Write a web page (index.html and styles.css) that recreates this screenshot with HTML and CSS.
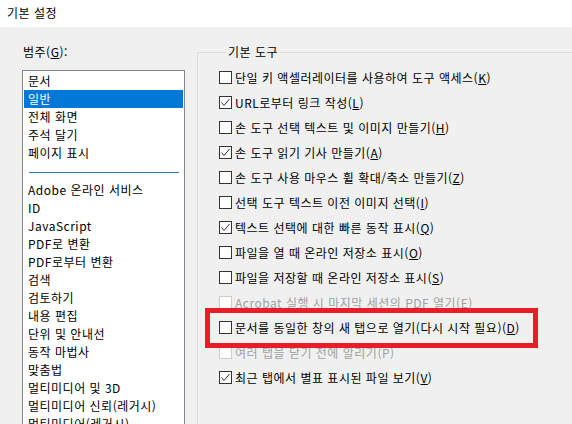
FILE: index.html
```html
<!DOCTYPE html>
<html lang="ko">
<head>
  <meta charset="UTF-8">
  <title>기본 설정</title>
  <link rel="stylesheet" href="styles.css">
</head>
<body>
  <div class="titlebar">기본 설정</div>

  <div class="dialog">
    <div class="category">
      <div class="cat-label">범주(<span class="key">G</span>):</div>
      <ul class="cat-list">
        <li>문서</li>
        <li class="selected">일반</li>
        <li>전체 화면</li>
        <li>주석 달기</li>
        <li>페이지 표시</li>
        <li class="sep"><span></span></li>
        <li>Adobe 온라인 서비스</li>
        <li>ID</li>
        <li>JavaScript</li>
        <li>PDF로 변환</li>
        <li>PDF로부터 변환</li>
        <li>검색</li>
        <li>검토하기</li>
        <li>내용 편집</li>
        <li>단위 및 안내선</li>
        <li>동작 마법사</li>
        <li>맞춤법</li>
        <li>멀티미디어 및 3D</li>
        <li>멀티미디어 신뢰(레거시)</li>
        <li>멀티미디어(레거시)</li>
      </ul>
    </div>

    <fieldset class="group">
      <legend>기본 도구</legend>
      <div class="opt"><span class="box"></span><span>단일 키 액셀러레이터를 사용하여 도구 액세스(<span class="key">K</span>)</span></div>
      <div class="opt"><span class="box"><svg viewBox="0 0 11 11"><polyline points="1.5,5.5 4,8.5 9.5,2" /></svg></span><span>URL로부터 링크 작성(<span class="key">L</span>)</span></div>
      <div class="opt"><span class="box"></span><span>손 도구 선택 텍스트 및 이미지 만들기(<span class="key">H</span>)</span></div>
      <div class="opt"><span class="box"><svg viewBox="0 0 11 11"><polyline points="1.5,5.5 4,8.5 9.5,2" /></svg></span><span>손 도구 읽기 기사 만들기(<span class="key">A</span>)</span></div>
      <div class="opt"><span class="box"></span><span>손 도구 사용 마우스 휠 확대/축소 만들기(<span class="key">Z</span>)</span></div>
      <div class="opt"><span class="box"></span><span>선택 도구 텍스트 이전 이미지 선택(<span class="key">I</span>)</span></div>
      <div class="opt"><span class="box"><svg viewBox="0 0 11 11"><polyline points="1.5,5.5 4,8.5 9.5,2" /></svg></span><span>텍스트 선택에 대한 빠른 동작 표시(<span class="key">Q</span>)</span></div>
      <div class="opt"><span class="box"></span><span>파일을 열 때 온라인 저장소 표시(<span class="key">O</span>)</span></div>
      <div class="opt"><span class="box"></span><span>파일을 저장할 때 온라인 저장소 표시(<span class="key">S</span>)</span></div>
      <div class="opt disabled"><span class="box"></span><span>Acrobat 실행 시 마지막 세션의 PDF 열기(E)</span></div>
      <div class="opt"><span class="box"></span><span>문서를 동일한 창의 새 탭으로 열기(다시 시작 필요)(<span class="key">D</span>)</span></div>
      <div class="opt disabled"><span class="box"></span><span>여러 탭을 닫기 전에 알리기(P)</span></div>
      <div class="opt"><span class="box"><svg viewBox="0 0 11 11"><polyline points="1.5,5.5 4,8.5 9.5,2" /></svg></span><span>최근 탭에서 별표 표시된 파일 보기(<span class="key">V</span>)</span></div>
    </fieldset>
  </div>

  <div class="highlight"></div>
</body>
</html>
```

FILE: styles.css
```css
html, body {
  overflow: hidden;
}
body {
  margin: 0;
  background-color: #f0f0f0;
  color: #000;
  font-family: "Noto Sans CJK KR", "Noto Sans", sans-serif;
  font-size: 12px;
  letter-spacing: 0.5px;
}
.titlebar {
  height: 27px;
  line-height: 25px;
  padding-left: 7px;
  background-color: #fff;
}
.dialog {
  display: flex;
  align-items: flex-start;
}
.category {
  margin-left: 22px;
  width: 163px;
}
.cat-label {
  margin-top: 17px;
  margin-bottom: 10px;
  line-height: 16px;
  padding-left: 1px;
}
.key {
  text-decoration: underline;
}
.cat-list {
  list-style: none;
  margin: 0;
  padding: 1px;
  background-color: #fff;
  border: 1px solid #828790;
}
.cat-list li {
  height: 18px;
  line-height: 18px;
  padding-left: 4px;
  white-space: nowrap;
}
.cat-list li.selected {
  background-color: #0078d7;
  color: #fff;
}
.cat-list li.sep {
  display: flex;
  align-items: center;
  padding: 1px 4px 0 5px;
}
.cat-list li.sep span {
  display: block;
  width: 151px;
  height: 1px;
  background-color: #2a78b8;
}
.group {
  flex: 1;
  margin: 17px 0 0 12px;
  padding: 5px 0 0 21px;
  border: none;
  border-top: 1px solid #dcdcdc;
  border-left: 1px solid #dcdcdc;
  height: 400px;
}
.group legend {
  margin-left: 7px;
  padding: 0 2px;
  line-height: 16px;
}
.opt {
  display: flex;
  align-items: center;
  gap: 3px;
  height: 25px;
  white-space: nowrap;
}
.box {
  box-sizing: border-box;
  width: 13px;
  height: 13px;
  flex-shrink: 0;
  border: 1px solid #333;
  background-color: #fff;
}
.box svg {
  display: block;
  width: 11px;
  height: 11px;
  fill: none;
  stroke: #333;
  stroke-width: 1;
}
.opt.disabled {
  color: #a0a0a0;
}
.opt.disabled .box {
  border-color: #cccccc;
}
.highlight {
  position: absolute;
  left: 205px;
  top: 308px;
  width: 333px;
  height: 40px;
  box-sizing: border-box;
  border: 5px solid #e81d27;
}
```
